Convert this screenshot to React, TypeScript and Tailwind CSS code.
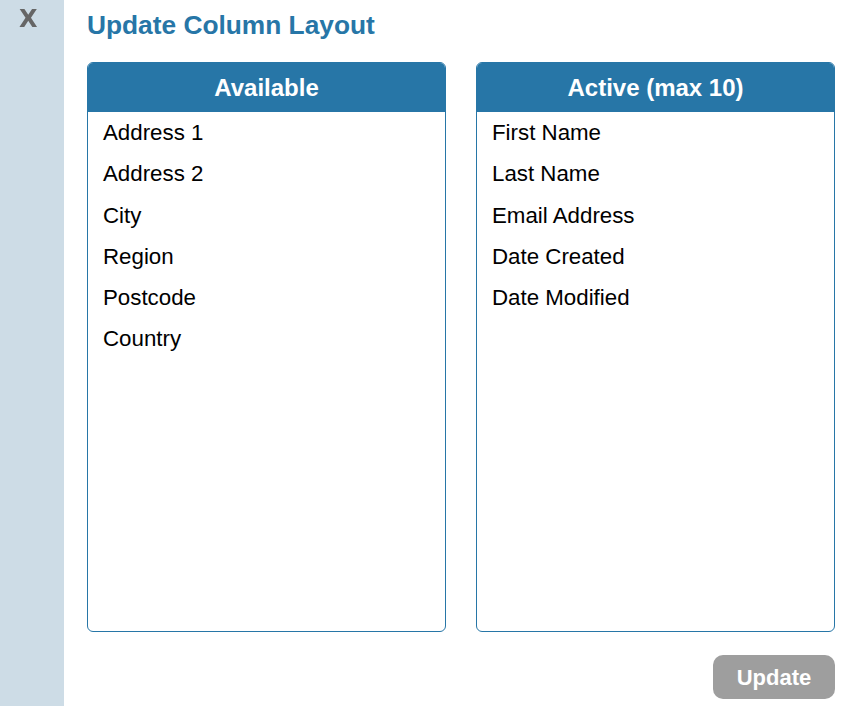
import React from "react";

const available = ["Address 1", "Address 2", "City", "Region", "Postcode", "Country"];
const active = ["First Name", "Last Name", "Email Address", "Date Created", "Date Modified"];

function Panel({ title, items }: { title: string; items: string[] }) {
  return (
    <div className="flex h-[570px] w-[359px] flex-col rounded-[6px] border border-[#2776a7] bg-white">
      <div className="flex h-[49px] items-center justify-center rounded-t-[5px] bg-[#2776a7] text-[24px] font-bold text-white">
        {title}
      </div>
      <ul className="flex flex-col">
        {items.map((it) => (
          <li key={it} className="pl-[15px] text-[22.3px] leading-[41.3px] text-black">
            {it}
          </li>
        ))}
      </ul>
    </div>
  );
}

export default function App() {
  return (
    <div
      className="flex h-[706px] w-[843px] bg-white"
      style={{ fontFamily: '"Liberation Sans", Arial, sans-serif' }}
    >
      <div className="w-[64px] shrink-0 bg-[#cddce6] pl-[19px]">
        <span
          className="mt-[6px] block h-[26px] text-[24px] leading-[26px] font-bold text-[#666] blur-[0.6px]"
          style={{ fontFamily: '"DejaVu Sans", sans-serif' }}
        >
          X
        </span>
      </div>
      <div className="flex flex-1 flex-col pl-[23px] pr-[8px]">
        <h1 className="pt-[10px] text-[26.3px] leading-[30px] font-bold text-[#2776a7]">
          Update Column Layout
        </h1>
        <div className="mt-[22px] flex gap-[30px]">
          <Panel title="Available" items={available} />
          <Panel title="Active (max 10)" items={active} />
        </div>
        <div className="mt-[23px] flex justify-end">
          <button className="h-[44px] w-[122px] rounded-[10px] bg-[#9e9e9e] text-[22px] font-bold text-white">
            Update
          </button>
        </div>
      </div>
    </div>
  );
}
